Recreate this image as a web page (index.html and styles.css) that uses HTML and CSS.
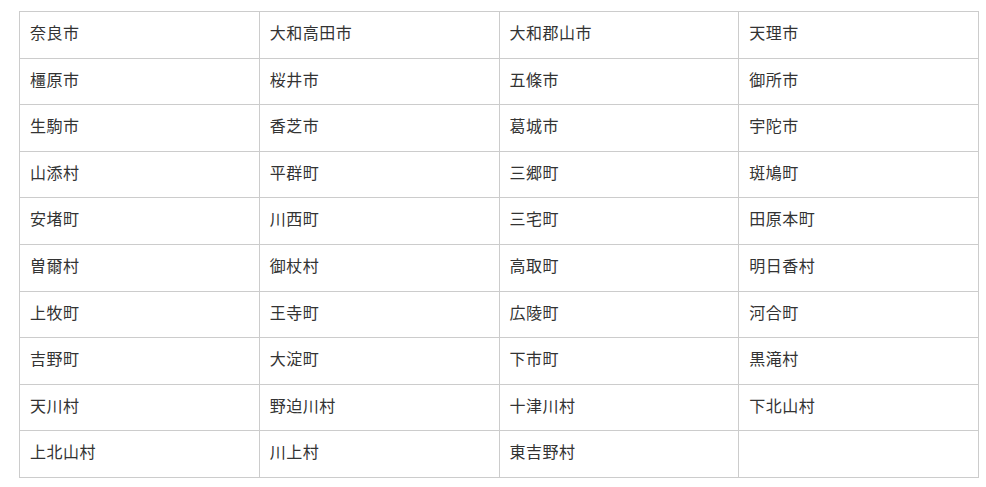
FILE: index.html
```html
<!DOCTYPE html>
<html lang="ja">
<head>
<meta charset="utf-8">
<link rel="stylesheet" href="styles.css">
</head>
<body>
<table class="city-table">
<tbody>
<tr><td>奈良市</td><td>大和高田市</td><td>大和郡山市</td><td>天理市</td></tr>
<tr><td>橿原市</td><td>桜井市</td><td>五條市</td><td>御所市</td></tr>
<tr><td>生駒市</td><td>香芝市</td><td>葛城市</td><td>宇陀市</td></tr>
<tr><td>山添村</td><td>平群町</td><td>三郷町</td><td>斑鳩町</td></tr>
<tr><td>安堵町</td><td>川西町</td><td>三宅町</td><td>田原本町</td></tr>
<tr><td>曽爾村</td><td>御杖村</td><td>高取町</td><td>明日香村</td></tr>
<tr><td>上牧町</td><td>王寺町</td><td>広陵町</td><td>河合町</td></tr>
<tr><td>吉野町</td><td>大淀町</td><td>下市町</td><td>黒滝村</td></tr>
<tr><td>天川村</td><td>野迫川村</td><td>十津川村</td><td>下北山村</td></tr>
<tr><td>上北山村</td><td>川上村</td><td>東吉野村</td><td></td></tr>
</tbody>
</table>
</body>
</html>
```

FILE: styles.css
```css
html, body {
  margin: 0;
  background: #fff;
}
body {
  padding: 11px 8px 0 19px;
  font-family: "Noto Sans CJK JP", "Noto Sans", sans-serif;
  font-size: 16px;
  letter-spacing: 0.5px;
  color: #333;
}
.city-table {
  width: 960px;
  border-collapse: collapse;
  table-layout: fixed;
}
.city-table td {
  border: 1px solid #ccc;
  padding: 8px 10px 12px;
  height: 25.6px;
  line-height: 25.6px;
  vertical-align: middle;
}
```
